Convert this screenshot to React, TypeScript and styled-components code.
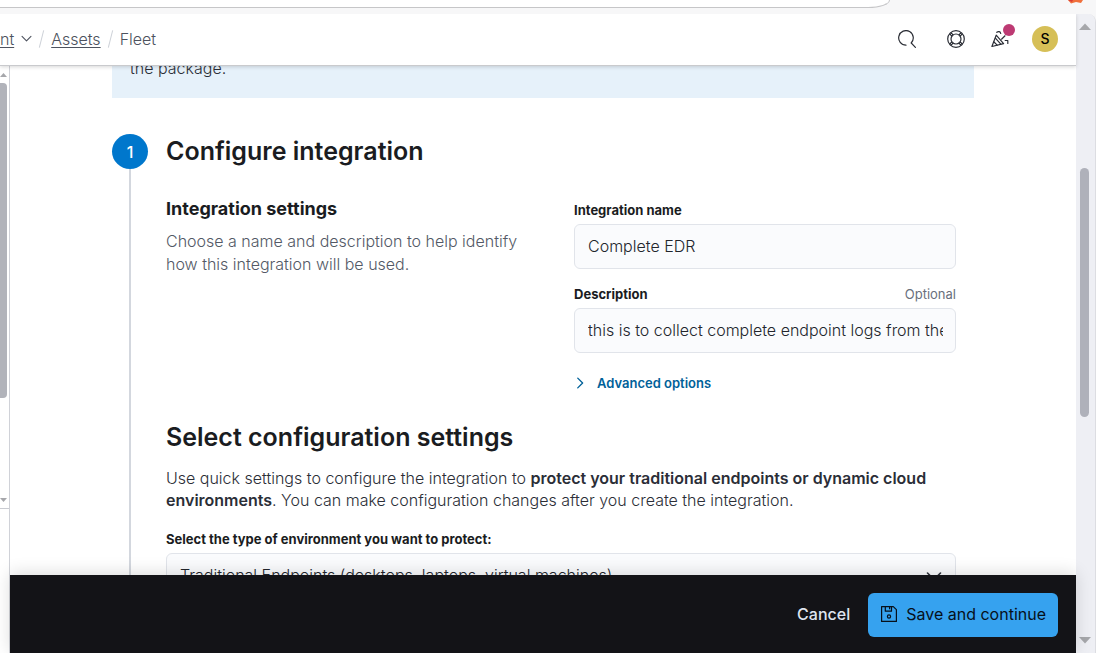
import React from "react";
import styled, { createGlobalStyle } from "styled-components";

const GlobalStyle = createGlobalStyle`
  *, *::before, *::after { box-sizing: border-box; }
  html, body, #root { height: 100%; margin: 0; }
  body {
    overflow: hidden;
    background: #ffffff;
    color: #2b2e37;
    font-family: Inter, "Liberation Sans", sans-serif;
    font-size: 16px;
    font-weight: 300;
    line-height: 22px;
  }
  h1, h2, h3, p { margin: 0; }
  button, input, select { font: inherit; margin: 0; }
`;

const Window = styled.div`
  display: flex;
  flex-direction: column;
  height: 100vh;
  background: #f7f7f8;
`;

const BrowserBar = styled.div`
  display: flex;
  flex: none;
  justify-content: space-between;
  align-items: flex-start;
  height: 14px;
  padding-right: 12px;
`;

const AddressField = styled.div`
  flex: 0 1 890px;
  height: 8px;
  background: #ffffff;
  border: 1px solid #c6c6c8;
  border-width: 0 1px 1px 0;
  border-bottom-right-radius: 22px 8px;
`;

const Viewport = styled.div`
  display: flex;
  flex: 1;
  min-height: 0;
  border-right: 1px solid #dcdde2;
  border-top-right-radius: 8px;
  overflow: hidden;
`;

const Page = styled.div`
  display: flex;
  flex: 1;
  flex-direction: column;
  min-width: 0;
  background: #ffffff;
`;

const Header = styled.header`
  position: relative;
  z-index: 2;
  display: flex;
  flex: none;
  justify-content: space-between;
  align-items: center;
  height: 52px;
  padding: 0 18px 2px 0;
  background: #ffffff;
  border-bottom: 1px solid #c9cacd;
  box-shadow: 0 1px 4px rgba(0, 0, 0, 0.16);
`;

const Breadcrumbs = styled.nav`
  display: flex;
  align-items: center;
  height: 22px;
  color: #4d525e;
`;

const Crumb = styled.a`
  color: inherit;
  text-decoration: underline;
  text-underline-offset: 2px;
`;

const CrumbMenu = styled.button`
  display: flex;
  align-items: center;
  gap: 7px;
  padding: 0;
  border: 0;
  background: none;
  color: inherit;
  text-decoration: underline;
  text-underline-offset: 2px;
`;

const Slash = styled.span`
  width: 1px;
  height: 18px;
  margin: 0 9px;
  background: #cdd1d8;
  transform: rotate(14deg);
`;

const HeaderActions = styled.div`
  display: flex;
  align-items: center;
  gap: 20px;
`;

const IconButton = styled.button<{ $spaced?: boolean }>`
  position: relative;
  display: flex;
  margin-right: ${(p) => (p.$spaced ? 5 : 0)}px;
  padding: 0 3px;
  border: 0;
  background: none;
  color: #2b2e36;
`;

const NewsDot = styled.span`
  position: absolute;
  top: -6px;
  right: -3px;
  width: 12px;
  height: 12px;
  border-radius: 50%;
  background: #bd3a73;
`;

const Avatar = styled.button`
  width: 26px;
  height: 26px;
  padding: 0;
  border: 0;
  border-radius: 50%;
  background: #d6bf57;
  color: #000000;
  font-size: 14px;
  font-weight: 500;
`;

const Body = styled.div`
  display: flex;
  flex: 1;
  min-height: 0;
`;

const SideNav = styled.div`
  display: flex;
  flex: none;
  flex-direction: column;
  width: 10px;
  border-right: 1px solid #d0d2d8;
`;

const NavScrollbar = styled.div`
  display: flex;
  flex: 0 1 443px;
  flex-direction: column;
  align-items: flex-start;
  padding-top: 7px;
  padding-bottom: 6px;
  border-bottom: 1px solid #c9cbd1;
`;

const NavThumb = styled.div`
  flex: 314 1 0;
  width: 7px;
  margin-top: 6px;
  border-radius: 0 4px 4px 0;
  background: #b1b3ba;
`;

const Space = styled.div<{ $grow: number }>`
  flex: ${(p) => p.$grow} 1 0;
`;

const Arrow = styled.svg`
  display: block;
  flex: none;
  fill: #a6a7ab;
`;

const Workspace = styled.div`
  display: flex;
  flex: 1;
  flex-direction: column;
  min-width: 0;
`;

const Content = styled.main`
  flex: 1;
  min-height: 0;
  padding: 0 102px;
  overflow: hidden;
`;

const Callout = styled.div`
  display: flex;
  align-items: flex-end;
  height: 32px;
  padding: 0 18px 19px;
  background: #e6f1fa;
`;

const Step = styled.section`
  display: grid;
  grid-template-columns: 36px minmax(0, 1fr);
  gap: 18px;
  margin-top: 36px;
  padding-right: 18px;
`;

const StepRail = styled.div`
  display: flex;
  flex-direction: column;
  align-items: center;
`;

const StepNumber = styled.span`
  display: flex;
  flex: none;
  align-items: center;
  justify-content: center;
  width: 36px;
  height: 35px;
  border-radius: 50%;
  background: #0077cc;
  color: #ffffff;
  font-weight: 500;
`;

const StepLine = styled.span`
  flex: 1;
  width: 2px;
  background: #d3d7de;
`;

const Title = styled.h2`
  color: #1a1c21;
  font-size: 25px;
  font-weight: 600;
  line-height: 35px;
`;

const SettingsRow = styled.div`
  display: grid;
  grid-template-columns: 1fr 1fr;
  gap: 26px;
  margin-top: 28px;
`;

const Subtitle = styled.h3`
  margin-bottom: 9px;
  color: #1a1c21;
  font-size: 18px;
  font-weight: 700;
  line-height: 24px;
`;

const Hint = styled.p`
  color: #535966;
  line-height: 23px;
`;

const Fields = styled.div`
  display: flex;
  flex-direction: column;
  gap: 16px;
  padding-top: 4px;
`;

const Field = styled.div`
  display: flex;
  flex-direction: column;
  gap: 5px;
`;

const LabelRow = styled.div`
  display: flex;
  justify-content: space-between;
  color: #69707d;
  font-size: 13px;
  font-weight: 400;
  line-height: 18px;
`;

const Label = styled.label`
  color: #1a1c21;
  font-size: 13px;
  font-weight: 700;
  line-height: 18px;
`;

const TextInput = styled.input`
  width: 100%;
  height: 45px;
  padding: 0 12px 2px 13px;
  border: 1px solid #e1e4ea;
  border-radius: 6px;
  background: #fafbfd;
  color: #22252c;
  outline: 0;
`;

const AdvancedButton = styled.button`
  display: flex;
  align-items: center;
  align-self: flex-start;
  gap: 11px;
  margin-top: 3px;
  padding: 0;
  border: 0;
  background: none;
  color: #006199;
  font-size: 13px;
  font-weight: 600;
`;

const Configuration = styled.div`
  margin-top: 26px;
`;

const Intro = styled.p`
  margin: 12px 0 19px;
`;

const Strong = styled.strong`
  font-weight: 600;
`;

const SelectBox = styled.div`
  display: grid;
  align-items: center;
  > * { grid-area: 1 / 1; }
  > svg { justify-self: end; margin-right: 14px; pointer-events: none; }
`;

const Select = styled.select`
  width: 100%;
  height: 45px;
  padding: 0 40px 2px 13px;
  border: 1px solid #e1e4ea;
  border-radius: 6px;
  background: #fafbfd;
  color: #22252c;
  appearance: none;
`;

const ActionBar = styled.footer`
  position: relative;
  z-index: 1;
  display: flex;
  flex: none;
  justify-content: flex-end;
  align-items: center;
  gap: 18px;
  height: 78px;
  padding: 2px 18px 0;
  background: #131317;
  box-shadow: 0 -2px 16px rgba(0, 0, 0, 0.14);
`;

const CancelButton = styled.button`
  padding: 0 0 2px;
  border: 0;
  background: none;
  color: #dfe5ef;
  font-weight: 500;
`;

const SaveButton = styled.button`
  display: flex;
  align-items: center;
  gap: 8px;
  height: 44px;
  padding: 0 12px 2px;
  border: 0;
  border-radius: 6px;
  background: #36a2ef;
  color: #07101a;
  font-weight: 400;
`;

const Scrollbar = styled.div`
  display: flex;
  flex: none;
  flex-direction: column;
  align-items: center;
  width: 19px;
  padding: 9px 2px 9px 0;
  background: #eeeff4;
`;

const Thumb = styled.div`
  flex: 249 1 0;
  width: 9px;
  border-radius: 5px;
  background: #afb1ba;
`;

function Chevron({ size, rotate = 0, weight = 1.1 }: { size: number; rotate?: number; weight?: number }) {
  return (
    <svg width={size} height={size} viewBox="0 0 16 16" fill="none" stroke="currentColor" strokeWidth={weight} strokeLinecap="round" strokeLinejoin="round" aria-hidden="true">
      <path d="M1.500 5L8 11.500 14.500 5" transform={`rotate(${rotate} 8 8)`} />
    </svg>
  );
}

function ScrollArrow({ down = false }: { down?: boolean }) {
  return (
    <Arrow width="12" height="7" viewBox="0 0 12 7" aria-hidden="true">
      <path d={down ? "M0 0h12L6 6.5z" : "M0 7h12L6 .5z"} />
    </Arrow>
  );
}

function NavArrow({ down = false }: { down?: boolean }) {
  return (
    <Arrow width="7" height="4" viewBox="0 0 7 4" aria-hidden="true">
      <path d={down ? "M0 0h7L3.500 4z" : "M0 4h7L3.500 0z"} />
    </Arrow>
  );
}

function SearchIcon() {
  return (
    <svg width="18" height="18" viewBox="0 0 18 18" fill="none" stroke="currentColor" strokeWidth="1.200" strokeLinecap="round" aria-hidden="true">
      <path d="M8 15.200A7.300 7.300 0 1 1 13.200 13l4.200 4.300" />
    </svg>
  );
}

function HelpIcon() {
  return (
    <svg width="18" height="18" viewBox="0 0 18 18" fill="none" stroke="currentColor" aria-hidden="true">
      <circle cx="9" cy="9" r="8.300" strokeWidth="1.200" />
      <circle cx="9" cy="9" r="5" strokeWidth="1.200" />
      <path d="M3.200 3.200l2.300 2.300M14.800 3.200l-2.300 2.300M3.200 14.800l2.300-2.300M14.800 14.800l-2.300-2.300" strokeWidth="3" />
      <path d="M3.800 3.800l1.300 1.300M14.200 3.800l-1.300 1.300M3.800 14.200l1.300-1.300M14.200 14.200l-1.300-1.300" stroke="#ffffff" strokeWidth="0.800" />
    </svg>
  );
}

function CheerIcon() {
  return (
    <svg width="18" height="18" viewBox="0 0 18 18" fill="none" stroke="currentColor" strokeWidth="1.200" strokeLinecap="round" strokeLinejoin="round" aria-hidden="true">
      <path d="M5.200 5.200L.9 16.500l11.700-2.800z" />
      <path d="M4.400 8.200l5.400 6M3 12l3.200 3.200M5.800 2.300c1.600-1.400 3.600-.7 3.900 1.200M10.500 9.200l3.500-3.400M14.200 10.500h2.600v3" />
    </svg>
  );
}

function SaveIcon() {
  return (
    <svg width="18" height="18" viewBox="0 0 18 18" fill="none" stroke="currentColor" strokeWidth="1.200" strokeLinejoin="round" aria-hidden="true">
      <path d="M1.600 1.600h11.700l3.100 3.100v11.700H1.600zM5.300 1.600v4.600h6.200V1.600M9.600 2v2.300" />
      <circle cx="9" cy="11.500" r="1.600" />
    </svg>
  );
}

function ExtensionIcon() {
  return (
    <svg width="16" height="4" viewBox="0 0 16 4" aria-hidden="true">
      <path d="M0 0h15l-2 3-5-1-5 1.500z" fill="#f0703c" />
      <path d="M0 0h5l-1 2z" fill="#d93a35" />
    </svg>
  );
}

export default function App() {
  return (
    <Window>
      <GlobalStyle />
      <BrowserBar>
        <AddressField />
        <ExtensionIcon />
      </BrowserBar>
      <Viewport>
        <Page>
          <Header>
            <Breadcrumbs aria-label="Breadcrumbs">
              <CrumbMenu type="button">
                nt <Chevron size={11} weight={1.6} />
              </CrumbMenu>
              <Slash />
              <Crumb href="#assets">Assets</Crumb>
              <Slash />
              <span>Fleet</span>
            </Breadcrumbs>
            <HeaderActions>
              <IconButton type="button" aria-label="Search" $spaced><SearchIcon /></IconButton>
              <IconButton type="button" aria-label="Help"><HelpIcon /></IconButton>
              <IconButton type="button" aria-label="News"><CheerIcon /><NewsDot /></IconButton>
              <Avatar type="button">S</Avatar>
            </HeaderActions>
          </Header>
          <Body>
            <SideNav>
              <NavScrollbar>
                <NavArrow />
                <NavThumb />
                <Space $grow={100} />
                <NavArrow down />
              </NavScrollbar>
            </SideNav>
            <Workspace>
              <Content>
                <Callout>the package.</Callout>
                <Step>
                  <StepRail>
                    <StepNumber>1</StepNumber>
                    <StepLine />
                  </StepRail>
                  <div>
                    <Title>Configure integration</Title>
                    <SettingsRow>
                      <div>
                        <Subtitle>Integration settings</Subtitle>
                        <Hint>Choose a name and description to help identify how this integration will be used.</Hint>
                      </div>
                      <Fields>
                        <Field>
                          <Label htmlFor="name">Integration name</Label>
                          <TextInput id="name" defaultValue="Complete EDR" />
                        </Field>
                        <Field>
                          <LabelRow>
                            <Label htmlFor="description">Description</Label>
                            <span>Optional</span>
                          </LabelRow>
                          <TextInput id="description" defaultValue="this is to collect complete endpoint logs from the" />
                        </Field>
                        <AdvancedButton type="button">
                          <Chevron size={12} rotate={-90} weight={1.8} />
                          Advanced options
                        </AdvancedButton>
                      </Fields>
                    </SettingsRow>
                    <Configuration>
                      <Title>Select configuration settings</Title>
                      <Intro>
                        Use quick settings to configure the integration to{" "}
                        <Strong>protect your traditional endpoints or dynamic cloud environments</Strong>. You can make
                        configuration changes after you create the integration.
                      </Intro>
                      <Field>
                        <Label htmlFor="environment">Select the type of environment you want to protect:</Label>
                        <SelectBox>
                          <Select id="environment">
                            <option>Traditional Endpoints (desktops, laptops, virtual machines)</option>
                          </Select>
                          <Chevron size={16} weight={1.6} />
                        </SelectBox>
                      </Field>
                    </Configuration>
                  </div>
                </Step>
              </Content>
              <ActionBar>
                <CancelButton type="button">Cancel</CancelButton>
                <SaveButton type="button"><SaveIcon />Save and continue</SaveButton>
              </ActionBar>
            </Workspace>
          </Body>
        </Page>
        <Scrollbar>
          <ScrollArrow />
          <Space $grow={138} />
          <Thumb />
          <Space $grow={220} />
          <ScrollArrow down />
        </Scrollbar>
      </Viewport>
    </Window>
  );
}
